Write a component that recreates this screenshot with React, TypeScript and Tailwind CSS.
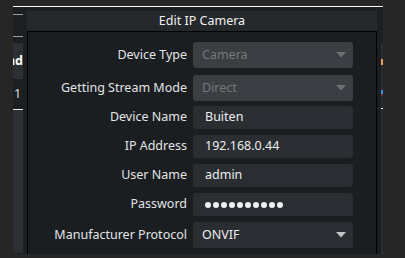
import type { ReactNode } from "react";

function Caret({ dim }: { dim?: boolean }) {
  return (
    <svg width="10" height="6" viewBox="0 0 10 6" className="shrink-0">
      <path d="M0 0h10L5 5.5z" fill={dim ? "#6c6f73" : "#c4c6c8"} />
    </svg>
  );
}

function Row({
  label,
  mt,
  children,
}: {
  label: string;
  mt: string;
  children: ReactNode;
}) {
  return (
    <div className={`flex items-center ${mt}`}>
      <div className="w-[165px] shrink-0 pr-[6px] text-right text-[12.5px] text-[#e2e4e6] whitespace-nowrap">
        {label}
      </div>
      {children}
    </div>
  );
}

function SelectBox({ value, disabled }: { value: string; disabled?: boolean }) {
  return (
    <div
      className={`flex h-[26px] w-[160px] items-center justify-between rounded-[3px] pl-[9px] pr-[7px] text-[12.5px] ${
        disabled ? "bg-[#3b3e42] text-[#75787c]" : "bg-[#2a2d31] text-[#eceef0]"
      }`}
    >
      <span>{value}</span>
      <Caret dim={disabled} />
    </div>
  );
}

function TextBox({ children }: { children: ReactNode }) {
  return (
    <div className="flex h-[23px] w-[160px] items-center rounded-[3px] bg-[#2a2d31] pl-[12px] text-[12.5px] text-[#eceef0]">
      {children}
    </div>
  );
}

export default function App() {
  return (
    <div
      className="h-[258px] w-[405px] overflow-hidden bg-[#262626] pl-[13px] pt-[6px]"
      style={{ fontFamily: '"Noto Sans", "Open Sans", sans-serif' }}
    >
      {/* window behind the dialog */}
      <div className="flex h-[248px] w-[370px] flex-col border-t border-white bg-[#1c1f22]">
        <div className="flex flex-1">
          {/* table peeking out on the left */}
          <div className="w-[14px] shrink-0">
            <div className="mt-[7px] h-px w-[10px] bg-[#9a9c9e]" />
            <div className="mt-[21px] h-px w-[10px] bg-[#9a9c9e]" />
            <div className="mt-[6px] flex h-[36px] w-[10px] items-center justify-end overflow-hidden bg-[#2c3034]">
              <span className="text-[12.5px] font-bold text-white">nd</span>
            </div>
            <div className="flex h-[30px] w-[10px] items-center overflow-hidden pl-[1px]">
              <span className="text-[12.5px] text-[#dcdcdc]">1</span>
            </div>
            <div className="h-px w-[10px] bg-[#e6e6e6]" />
            <div className="h-[143px] w-[10px] bg-[#2c3034]" />
          </div>

          {/* dialog */}
          <div className="flex w-[350px] shrink-0 flex-col pt-[4px]">
            <div className="flex h-[20px] items-center justify-center bg-[#24282b] text-[12.5px] text-[#f2f2f2]">
              Edit IP Camera
            </div>
            <div className="flex flex-1 flex-col border-x border-t border-black bg-[#1b1e21]">
              <Row label="Device Type" mt="mt-[10px]">
                <SelectBox value="Camera" disabled />
              </Row>
              <Row label="Getting Stream Mode" mt="mt-[7px]">
                <SelectBox value="Direct" disabled />
              </Row>
              <Row label="Device Name" mt="mt-[5px]">
                <TextBox>Buiten</TextBox>
              </Row>
              <Row label="IP Address" mt="mt-[6px]">
                <TextBox>192.168.0.44</TextBox>
              </Row>
              <Row label="User Name" mt="mt-[6px]">
                <TextBox>admin</TextBox>
              </Row>
              <Row label="Password" mt="mt-[6px]">
                <TextBox>
                  <span className="flex gap-[2px]">
                    {Array.from({ length: 10 }).map((_, i) => (
                      <span key={i} className="h-[6px] w-[6px] rounded-full bg-[#f0f0f0]" />
                    ))}
                  </span>
                </TextBox>
              </Row>
              <Row label="Manufacturer Protocol" mt="mt-[6px]">
                <SelectBox value="ONVIF" />
              </Row>
            </div>
          </div>

          {/* table peeking out on the right */}
          <div className="flex w-[6px] shrink-0 justify-end pt-[36px]">
            <div className="flex w-[2px] flex-col bg-[#2a2d31]">
              <div className="mt-[16px] h-[6px] w-[2px] bg-[#e8a060]" />
              <div className="mt-[25px] h-[4px] w-[2px] bg-[#3d8fe0]" />
              <div className="h-[2px] w-[2px] bg-[#7a3030]" />
              <div className="mt-[12px] h-px w-[2px] bg-[#e6e6e6]" />
            </div>
          </div>
        </div>
      </div>
    </div>
  );
}
